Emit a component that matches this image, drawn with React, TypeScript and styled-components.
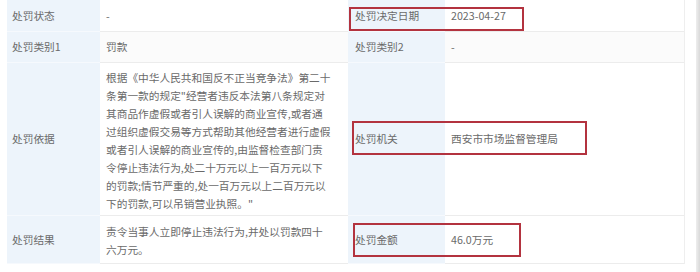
import React from 'react';
import styled, { createGlobalStyle } from 'styled-components';

const GlobalStyle = createGlobalStyle`
  html, body {
    margin: 0;
    padding: 0;
    background: #ffffff;
  }
  body {
    font-family: 'Noto Sans CJK SC', 'Noto Sans', sans-serif;
  }
`;

const Page = styled.div`
  width: 700px;
  height: 272px;
  display: flex;
  overflow: hidden;
  background: #ffffff;
`;

const Table = styled.div`
  margin-left: 7px;
  width: 677px;
  display: grid;
  grid-template-columns: 93px 248px 97px 239px;
  grid-template-rows: 32px 31px 153px 48px;
  align-self: flex-start;
  border-right: 1px solid #eeeeee;
`;

const Cell = styled.div<{ $label?: boolean; $shade?: boolean; $pad?: number }>`
  position: relative;
  box-sizing: border-box;
  display: flex;
  align-items: center;
  padding: 0 ${(p) => p.$pad ?? (p.$label ? 5 : 6)}px;
  background: ${(p) => (p.$label ? '#edf4fb' : p.$shade ? '#fbfbfb' : '#ffffff')};
  border-bottom: 1px solid ${(p) => (p.$label ? '#f6f9fd' : '#ececec')};
  color: #6a6a6a;
  font-size: 10.7px;
  line-height: 18px;
  white-space: nowrap;
`;

const Para = styled.p`
  margin: 0;
  padding-top: 3px;
`;

const Mark = styled.div<{ $top: number; $left: number; $w: number; $h: number }>`
  position: absolute;
  z-index: 2;
  top: ${(p) => p.$top}px;
  left: ${(p) => p.$left}px;
  width: ${(p) => p.$w}px;
  height: ${(p) => p.$h}px;
  box-sizing: border-box;
  border: 2px solid #b3333f;
  pointer-events: none;
`;

const ScrollEdge = styled.div`
  margin-left: auto;
  width: 4px;
  height: 272px;
  background: linear-gradient(to right, #eeeeee, #d8d8d8);
`;

const basis = [
  '根据《中华人民共和国反不正当竞争法》第二十',
  '条第一款的规定"经营者违反本法第八条规定对',
  '其商品作虚假或者引人误解的商业宣传,或者通',
  '过组织虚假交易等方式帮助其他经营者进行虚假',
  '或者引人误解的商业宣传的,由监督检查部门责',
  '令停止违法行为,处二十万元以上一百万元以下',
  '的罚款;情节严重的,处一百万元以上二百万元以',
  '下的罚款,可以吊销营业执照。"',
];

const result = ['责令当事人立即停止违法行为,并处以罚款四十', '六万元。'];

const Lines: React.FC<{ lines: string[] }> = ({ lines }) => (
  <Para>
    {lines.map((l, i) => (
      <React.Fragment key={i}>
        {l}
        {i < lines.length - 1 && <br />}
      </React.Fragment>
    ))}
  </Para>
);

export default function App() {
  return (
    <Page>
      <GlobalStyle />
      <Table>
        <Cell $label>处罚状态</Cell>
        <Cell>-</Cell>
        <Cell $label $pad={7}>
          <Mark $top={7} $left={1} $w={175} $h={24} />
          处罚决定日期
        </Cell>
        <Cell>2023-04-27</Cell>

        <Cell $label>处罚类别1</Cell>
        <Cell $shade>罚款</Cell>
        <Cell $label $pad={7}>处罚类别2</Cell>
        <Cell $shade>-</Cell>

        <Cell $label>处罚依据</Cell>
        <Cell>
          <Lines lines={basis} />
        </Cell>
        <Cell $label $pad={7}>
          <Mark $top={58} $left={4} $w={235} $h={34} />
          处罚机关
        </Cell>
        <Cell>西安市市场监督管理局</Cell>

        <Cell $label>处罚结果</Cell>
        <Cell>
          <Lines lines={result} />
        </Cell>
        <Cell $label $pad={7}>
          <Mark $top={7} $left={5} $w={168} $h={34} />
          处罚金额
        </Cell>
        <Cell>46.0万元</Cell>
      </Table>
      <ScrollEdge />
    </Page>
  );
}
